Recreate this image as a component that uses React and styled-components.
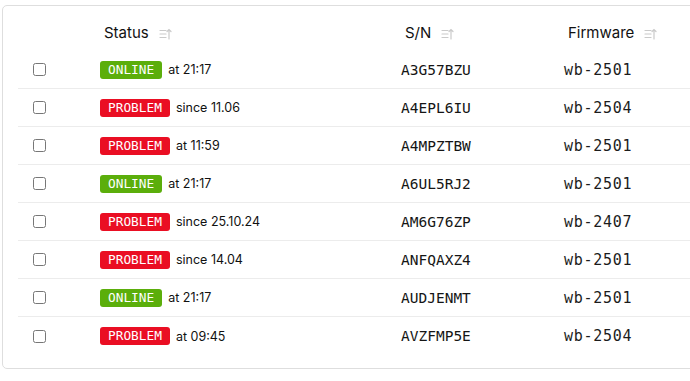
import React from 'react';
import styled, { createGlobalStyle } from 'styled-components';

const GlobalStyle = createGlobalStyle`
  html, body {
    margin: 0;
    padding: 0;
    background: #fff;
    overflow: hidden;
  }
  body {
    font-family: Inter, "Noto Sans", sans-serif;
    color: #1b1b1b;
  }
`;

const Page = styled.div`
  width: 690px;
  overflow: hidden;
  padding: 5px 0 0 2px;
  box-sizing: border-box;
`;

const Card = styled.div`
  width: 740px;
  border: 1px solid #dedede;
  border-radius: 5px;
  padding: 0 0 13px 15px;
  box-sizing: border-box;
`;

const Grid = styled.div`
  display: grid;
  grid-template-columns: 82px 301px 163px 1fr;
`;

const HeadCell = styled.div`
  height: 45px;
  display: flex;
  align-items: flex-start;
  gap: 10px;
  padding: 19px 0 0 4px;
  box-sizing: border-box;
  font-size: 15px;
  line-height: 16px;
  font-weight: 400;
  color: #111;
`;

const Cell = styled.div`
  height: 38px;
  display: flex;
  align-items: center;
  box-sizing: border-box;
  border-bottom: ${(p) => (p.$last ? 'none' : '1px solid #ececec')};
  padding-left: ${(p) => p.$pad || 0}px;
`;

const Check = styled.span`
  width: 11px;
  height: 11px;
  border: 1px solid #777;
  border-radius: 2.5px;
  background: #fff;
`;

const Badge = styled.span`
  display: inline-block;
  height: 18px;
  line-height: 18px;
  padding: 0 8px;
  border-radius: 3px;
  background: ${(p) => (p.$ok ? '#5bae0b' : '#ea0e23')};
  color: #fff;
  font-family: "DejaVu Sans Mono", monospace;
  font-size: 12.8px;
  margin-right: 6px;
`;

const Since = styled.span`
  font-size: 12.5px;
  color: #111;
`;

const Serial = styled.span`
  font-family: "DejaVu Sans Mono", monospace;
  font-size: 14.5px;
  color: #151515;
`;

const Firmware = styled.span`
  font-family: "DejaVu Sans Mono", monospace;
  font-size: 15px;
  letter-spacing: 0.7px;
  color: #1c1c1c;
`;

const SortIcon = () => (
  <svg width="13" height="12" viewBox="0 0 13 12" fill="none" stroke="#cacaca" strokeWidth="1.2" strokeLinecap="round" style={{ marginTop: 3 }}>
    <path d="M1 2.5h6M1 6h6M1 9.5h6" />
    <path d="M10 11V1.5M8 3.5l2-2 2 2" />
  </svg>
);

const rows = [
  { ok: true, when: 'at 21:17', sn: 'A3G57BZU', fw: 'wb-2501' },
  { ok: false, when: 'since 11.06', sn: 'A4EPL6IU', fw: 'wb-2504' },
  { ok: false, when: 'at 11:59', sn: 'A4MPZTBW', fw: 'wb-2501' },
  { ok: true, when: 'at 21:17', sn: 'A6UL5RJ2', fw: 'wb-2501' },
  { ok: false, when: 'since 25.10.24', sn: 'AM6G76ZP', fw: 'wb-2407' },
  { ok: false, when: 'since 14.04', sn: 'ANFQAXZ4', fw: 'wb-2501' },
  { ok: true, when: 'at 21:17', sn: 'AUDJENMT', fw: 'wb-2501' },
  { ok: false, when: 'at 09:45', sn: 'AVZFMP5E', fw: 'wb-2504' },
];

export default function App() {
  return (
    <Page>
      <GlobalStyle />
      <Card>
        <Grid>
          <HeadCell />
          <HeadCell>Status <SortIcon /></HeadCell>
          <HeadCell>S/N <SortIcon /></HeadCell>
          <HeadCell>Firmware <SortIcon /></HeadCell>
          {rows.map((r, i) => {
            const last = i === rows.length - 1;
            return (
              <React.Fragment key={r.sn}>
                <Cell $last={last} $pad={15}><Check /></Cell>
                <Cell $last={last}>
                  <Badge $ok={r.ok}>{r.ok ? 'ONLINE' : 'PROBLEM'}</Badge>
                  <Since>{r.when}</Since>
                </Cell>
                <Cell $last={last}><Serial>{r.sn}</Serial></Cell>
                <Cell $last={last}><Firmware>{r.fw}</Firmware></Cell>
              </React.Fragment>
            );
          })}
        </Grid>
      </Card>
    </Page>
  );
}
